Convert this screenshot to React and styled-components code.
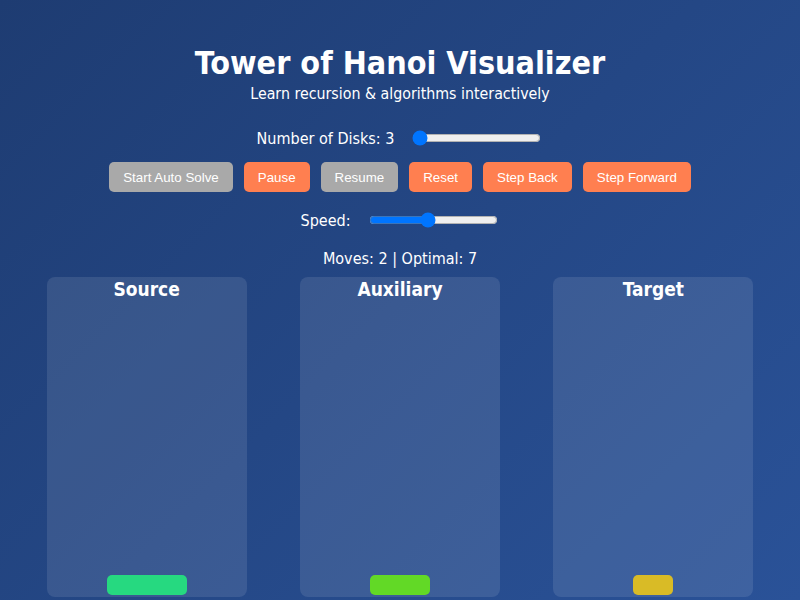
import styled, { createGlobalStyle } from "styled-components";

const GlobalStyle = createGlobalStyle`
  html, body {
    margin: 0;
    padding: 0;
  }
  body {
    min-height: 100vh;
    background: linear-gradient(135deg, #1e3c72, #2a5298);
    background-attachment: fixed;
    color: #ffffff;
    font-family: "DejaVu Sans Condensed", "DejaVu Sans", sans-serif;
  }
`;

const Page = styled.div`
  display: flex;
  flex-direction: column;
  align-items: center;
  padding: 43px 20px 0;
`;

const Title = styled.h1`
  margin: 0;
  font-size: 32px;
  font-weight: bold;
  line-height: 40px;
`;

const Subtitle = styled.p`
  margin: 1px 0 24px;
  font-size: 15.8px;
  line-height: 20px;
`;

const ControlRow = styled.div`
  display: flex;
  align-items: center;
  gap: 16px;
  font-size: 16px;
`;

const Slider = styled.input`
  margin: 2px;
  width: 129px;
`;

const Buttons = styled.div`
  display: flex;
  gap: 11px;
  margin: 14px 0 18px;
`;

const Button = styled.button`
  height: 30px;
  padding: 0 14px;
  border: none;
  border-radius: 5px;
  background: ${(p) => (p.disabled ? "#a9a9a9" : "#ff7f50")};
  color: #ffffff;
  font-family: "Liberation Sans", Arial, sans-serif;
  font-size: 13.33px;
  cursor: pointer;
`;

const Stats = styled.div`
  margin: 19px 0 8px;
  font-size: 16px;
  line-height: 20px;
`;

const Towers = styled.div`
  align-self: stretch;
  display: flex;
  justify-content: space-around;
`;

const Tower = styled.div`
  width: 200px;
  height: 320px;
  display: flex;
  flex-direction: column;
  align-items: center;
  background: rgba(255, 255, 255, 0.1);
  border-radius: 8px;
`;

const TowerName = styled.h3`
  margin: 0;
  font-size: 19px;
  font-weight: bold;
  line-height: 25px;
`;

const Stack = styled.div`
  flex: 1;
  display: flex;
  flex-direction: column-reverse;
  align-items: center;
  padding-bottom: 2px;
  gap: 2px;
`;

const Disk = styled.div`
  height: 20px;
  border-radius: 5px;
  width: ${(p) => 20 + p.size * 20}px;
  background: hsl(${(p) => p.size * 50}, 70%, 50%);
`;

const towers = [
  { name: "Source", disks: [3] },
  { name: "Auxiliary", disks: [2] },
  { name: "Target", disks: [1] },
];

const App = () => {
  return (
    <>
      <GlobalStyle />
      <Page>
        <Title>Tower of Hanoi Visualizer</Title>
        <Subtitle>Learn recursion &amp; algorithms interactively</Subtitle>
        <ControlRow>
          <label>Number of Disks: 3</label>
          <Slider type="range" min="3" max="8" defaultValue="3" />
        </ControlRow>
        <Buttons>
          <Button disabled>Start Auto Solve</Button>
          <Button>Pause</Button>
          <Button disabled>Resume</Button>
          <Button>Reset</Button>
          <Button>Step Back</Button>
          <Button>Step Forward</Button>
        </Buttons>
        <ControlRow>
          <label>Speed:</label>
          <Slider type="range" min="0" max="100" defaultValue="46" />
        </ControlRow>
        <Stats>Moves: 2 | Optimal: 7</Stats>
        <Towers>
          {towers.map((t) => (
            <Tower key={t.name}>
              <TowerName>{t.name}</TowerName>
              <Stack>
                {t.disks.map((d) => (
                  <Disk key={d} size={d} />
                ))}
              </Stack>
            </Tower>
          ))}
        </Towers>
      </Page>
    </>
  );
};

export default App;
